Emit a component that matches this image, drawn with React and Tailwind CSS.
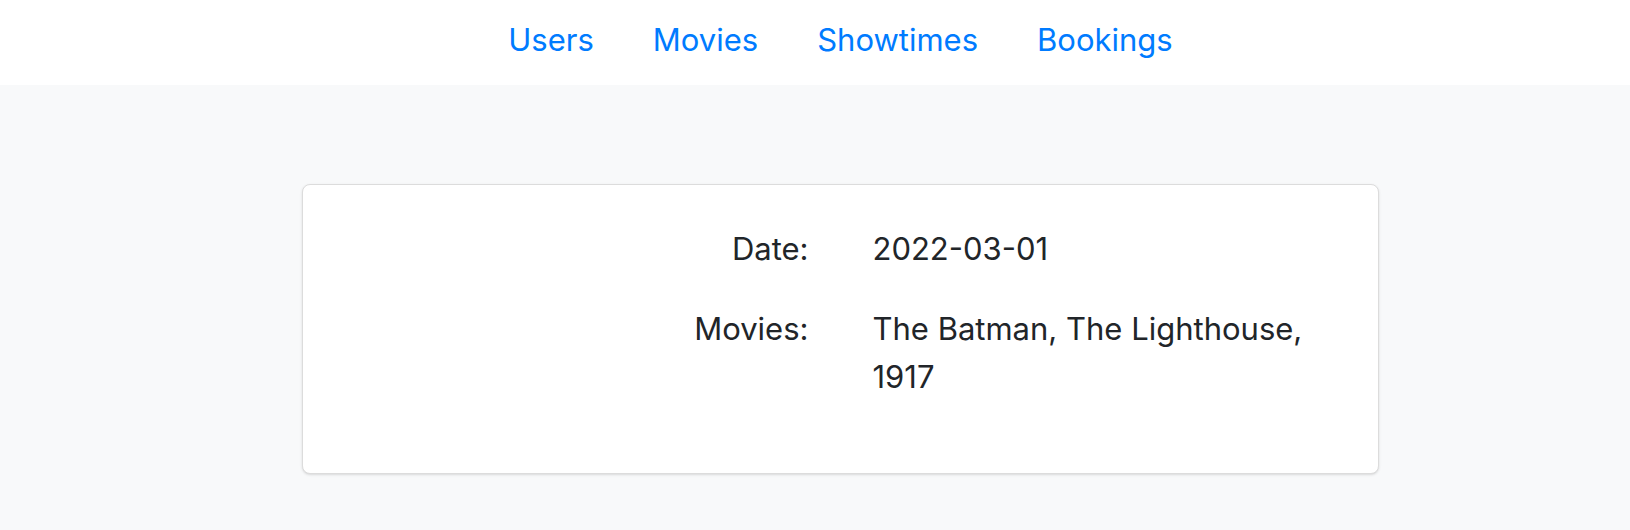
const links = ['Users', 'Movies', 'Showtimes', 'Bookings'];

const rows = [
  { label: 'Date:', value: '2022-03-01' },
  { label: 'Movies:', value: 'The Batman, The Lighthouse, 1917' },
];

const App = () => {
  return (
    <div
      className="min-h-[530px] bg-[#f8f9fa] pl-[51px] text-[#212529]"
      style={{ fontFamily: 'Inter, "Liberation Sans", sans-serif' }}
    >
      {/* Top nav */}
      <nav className="h-[85px] bg-white -ml-[51px] pl-[51px] flex items-center justify-center gap-[59px] pb-[6px]">
        {links.map((link) => (
          <a key={link} href="#" className="text-[31px] leading-[48px] text-[#007bff]">
            {link}
          </a>
        ))}
      </nav>

      {/* Detail card */}
      <div className="pt-[99px]">
        <div className="w-[1077px] mx-auto bg-white border border-[#dcdcdc] rounded-lg shadow-sm px-10 pt-10 pb-10">
          {rows.map((row) => (
            <div key={row.label} className="grid grid-cols-2 mb-8 text-[31px] leading-[48px]">
              <div className="text-right pr-8">{row.label}</div>
              <div className="pl-8">{row.value}</div>
            </div>
          ))}
        </div>
      </div>
    </div>
  );
};

export default App;
